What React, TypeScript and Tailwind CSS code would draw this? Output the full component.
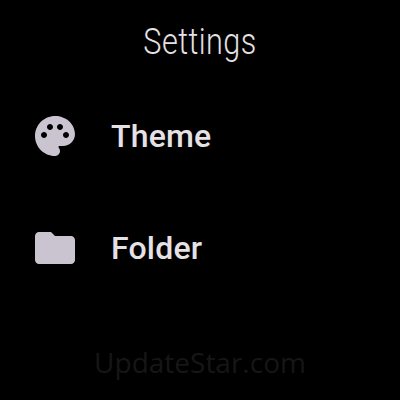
export default function App() {
  return (
    <div className="w-[400px] h-[400px] bg-black flex flex-col items-center font-['Roboto',sans-serif]">
      <div className="h-[80px] pt-[4px] w-full flex items-center justify-center text-[36px] leading-none text-[#e6e1e5] font-light tracking-[0.5px] scale-x-[0.85]">Settings</div>
      <div className="w-full flex items-center h-[112px] pl-[31px] gap-[32px]">
        <svg viewBox="0 0 24 24" className="w-[48px] h-[48px] fill-[#cac4d0] shrink-0"><path d="M12 2C6.49 2 2 6.49 2 12s4.49 10 10 10c1.38 0 2.5-1.12 2.5-2.5 0-.61-.23-1.2-.64-1.67-.08-.1-.13-.21-.13-.33 0-.28.22-.5.5-.5H16c3.31 0 6-2.69 6-6 0-4.96-4.49-9-10-9zm-5.5 11c-.83 0-1.5-.67-1.5-1.5S5.67 10 6.5 10s1.5.67 1.5 1.5S7.33 13 6.5 13zm3-4C8.67 9 8 8.33 8 7.5S8.67 6 9.5 6s1.5.67 1.5 1.5S10.33 9 9.5 9zm5 0c-.83 0-1.5-.67-1.5-1.5S13.67 6 14.5 6s1.5.67 1.5 1.5S15.33 9 14.5 9zm3 4c-.83 0-1.5-.67-1.5-1.5s.67-1.5 1.5-1.5 1.5.67 1.5 1.5-.67 1.5-1.5 1.5z" /></svg>
        <span className="text-[32px] font-medium tracking-[0.2px] text-[#e6e1e5]">Theme</span>
      </div>
      <div className="w-full flex items-center h-[112px] pl-[31px] gap-[32px]">
        <svg viewBox="0 0 24 24" className="w-[48px] h-[48px] fill-[#cac4d0] shrink-0"><path d="M10 4H4c-1.1 0-2 .9-2 2v12c0 1.1.9 2 2 2h16c1.1 0 2-.9 2-2V8c0-1.1-.9-2-2-2h-8l-2-2z" /></svg>
        <span className="text-[32px] font-medium tracking-[0.2px] text-[#e6e1e5]">Folder</span>
      </div>
      <div className="flex-1 w-full flex items-center justify-center text-[28px] text-[#161616] pt-[20px] font-['Open_Sans',sans-serif]">UpdateStar.com</div>
    </div>
  );
}
